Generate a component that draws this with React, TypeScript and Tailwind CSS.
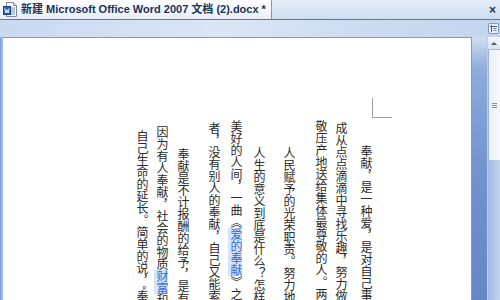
import React from "react";

function DocIcon() {
  return (
    <svg width="14" height="15" viewBox="0 0 14 15" className="shrink-0">
      <path d="M3.5 0.5 H10.5 L13.5 3.5 V14.5 H3.5 Z" fill="#ffffff" stroke="#7a8aa3" />
      <path d="M10.5 0.5 V3.5 H13.5" fill="#e6ecf5" stroke="#7a8aa3" />
      <line x1="7" y1="6" x2="12" y2="6" stroke="#6f8fc7" />
      <line x1="7" y1="8" x2="12" y2="8" stroke="#6f8fc7" />
      <line x1="7" y1="10" x2="12" y2="10" stroke="#6f8fc7" />
      <line x1="7" y1="12" x2="12" y2="12" stroke="#6f8fc7" />
      <rect x="0.5" y="4.5" width="7" height="8" fill="#2f5fb3" stroke="#1e4389" />
      <path d="M1.8 6.3 L2.8 11 L4 7.8 L5.2 11 L6.2 6.3" fill="none" stroke="#ffffff" strokeWidth="0.9" />
    </svg>
  );
}

function RulerIcon() {
  return (
    <svg width="11" height="11" viewBox="0 0 11 11">
      <rect x="0.5" y="0.5" width="10" height="10" rx="1.5" fill="#e9eff8" stroke="#8598b6" />
      <line x1="2" y1="3.5" x2="9" y2="3.5" stroke="#4d5d77" />
      <line x1="3.5" y1="2" x2="3.5" y2="9" stroke="#4d5d77" />
      <line x1="5.5" y1="5.5" x2="8.5" y2="5.5" stroke="#6d7d97" />
      <line x1="5.5" y1="7.5" x2="8.5" y2="7.5" stroke="#6d7d97" />
    </svg>
  );
}

function Col({ className, children }: { className: string; children: React.ReactNode }) {
  return (
    <div
      className={
        "[writing-mode:vertical-rl] w-[12px] shrink-0 text-[12px] leading-[12px] whitespace-nowrap text-[#2a2a2a] " +
        className
      }
    >
      {children}
    </div>
  );
}

export default function App() {
  return (
    <div className="w-[500px] h-[300px] overflow-hidden flex flex-col bg-[#c9d9ef] font-['Liberation_Sans','Noto_Sans_CJK_SC',sans-serif]">
      {/* tab bar */}
      <div className="h-[19px] flex bg-gradient-to-b from-[#e4edf8] to-[#cfddf1]">
        <div className="w-[272px] h-full flex items-center gap-[4px] pl-[3px] bg-gradient-to-b from-[#ffffff] to-[#e7eef8] border-r border-[#7f98bd]">
          <DocIcon />
          <span className="text-[11px] font-bold text-[#1c3256] whitespace-nowrap leading-none">
            新建 Microsoft Office Word 2007 文档 (2).docx *
          </span>
        </div>
        <div className="flex-1 flex items-center justify-end pr-[4px]">
          <span className="text-[12px] font-bold text-[#2a3a55] leading-none">×</span>
        </div>
      </div>
      <div className="h-[1px] bg-[#5877ab]" />
      {/* ruler strip */}
      <div className="h-[17px] flex justify-end items-center pr-[1px] bg-[linear-gradient(100deg,#c8d9f0_0%,#dbe6f5_45%,#cddcf1_70%,#c3d5ee_100%)]">
        <RulerIcon />
      </div>
      {/* document area */}
      <div className="flex-1 flex min-h-0">
        <div className="w-[3px] bg-gradient-to-r from-[#7b9dd5] to-[#a9c2e8]" />
        <div className="w-[469px] bg-white border-t border-r border-[#8c9ab0] overflow-hidden flex flex-row-reverse items-start pr-[79px]">
          <div className="w-[20px] h-[20px] shrink-0 border-l border-b border-[#a0a0a0] mt-[60px]" />
          <Col className="mt-[107px] mr-[1px]">奉献，是一种爱，是对自己事</Col>
          <Col className="mt-[84px] mr-[13px]">成从点点滴滴中寻找乐趣，努力做好</Col>
          <Col className="mt-[82px] mr-[8px]">敬压产地送给集体最尊敬的人。两</Col>
          <Col className="mt-[109px] mr-[20px]">人民赋予的光荣职责。努力地</Col>
          <Col className="mt-[109px] mr-[18px]">人生的意义到底是什么？怎样</Col>
          <Col className="mt-[82px] mr-[11px]">
            美好的人间，一曲《<span className="text-[#2f6bd6] bg-[#d5e4f7]">爱的奉献</span>》之
          </Col>
          <Col className="mt-[84px] mr-[10px]">者，没有别人的奉献，自己又能索</Col>
          <Col className="mt-[110px] mr-[19px]">奉献是不计报酬的给予，是有</Col>
          <Col className="mt-[88px] mr-[9px]">
            因为有人奉献，社会的物质<span className="text-[#2f6bd6] bg-[#d5e4f7]">财富</span>和精
          </Col>
          <Col className="mt-[92px] mr-[8px]">自己生命的延长。简单的说，“奉献</Col>
        </div>
        <div className="w-[16px] border-r border-[#b9cdee] bg-[linear-gradient(to_bottom,#d0def2_0%,#8eacdc_12%,#7194cf_50%,#6487c5_100%)]" />
        <div className="w-[12px] flex flex-col bg-[#b7cbea]">
          <div className="h-[13px] flex items-center justify-center bg-gradient-to-b from-[#f4f7fc] to-[#d9e4f3] border-b border-[#a9bad3]">
            <div className="w-0 h-0 border-l-[3px] border-r-[3px] border-b-[3px] border-l-transparent border-r-transparent border-b-[#4a5a75]" />
          </div>
          <div className="h-[110px] flex flex-col items-center justify-center gap-[1px] bg-gradient-to-r from-[#e9eff8] to-[#f6f9fd] border-l border-[#9fb2cf]">
            <div className="w-[5px] h-[1px] bg-[#7d8ea8]" />
            <div className="w-[5px] h-[1px] bg-[#7d8ea8]" />
            <div className="w-[5px] h-[1px] bg-[#7d8ea8]" />
          </div>
          <div className="flex-1 bg-gradient-to-r from-[#9fb9e2] to-[#c3d5ef]" />
        </div>
      </div>
    </div>
  );
}
